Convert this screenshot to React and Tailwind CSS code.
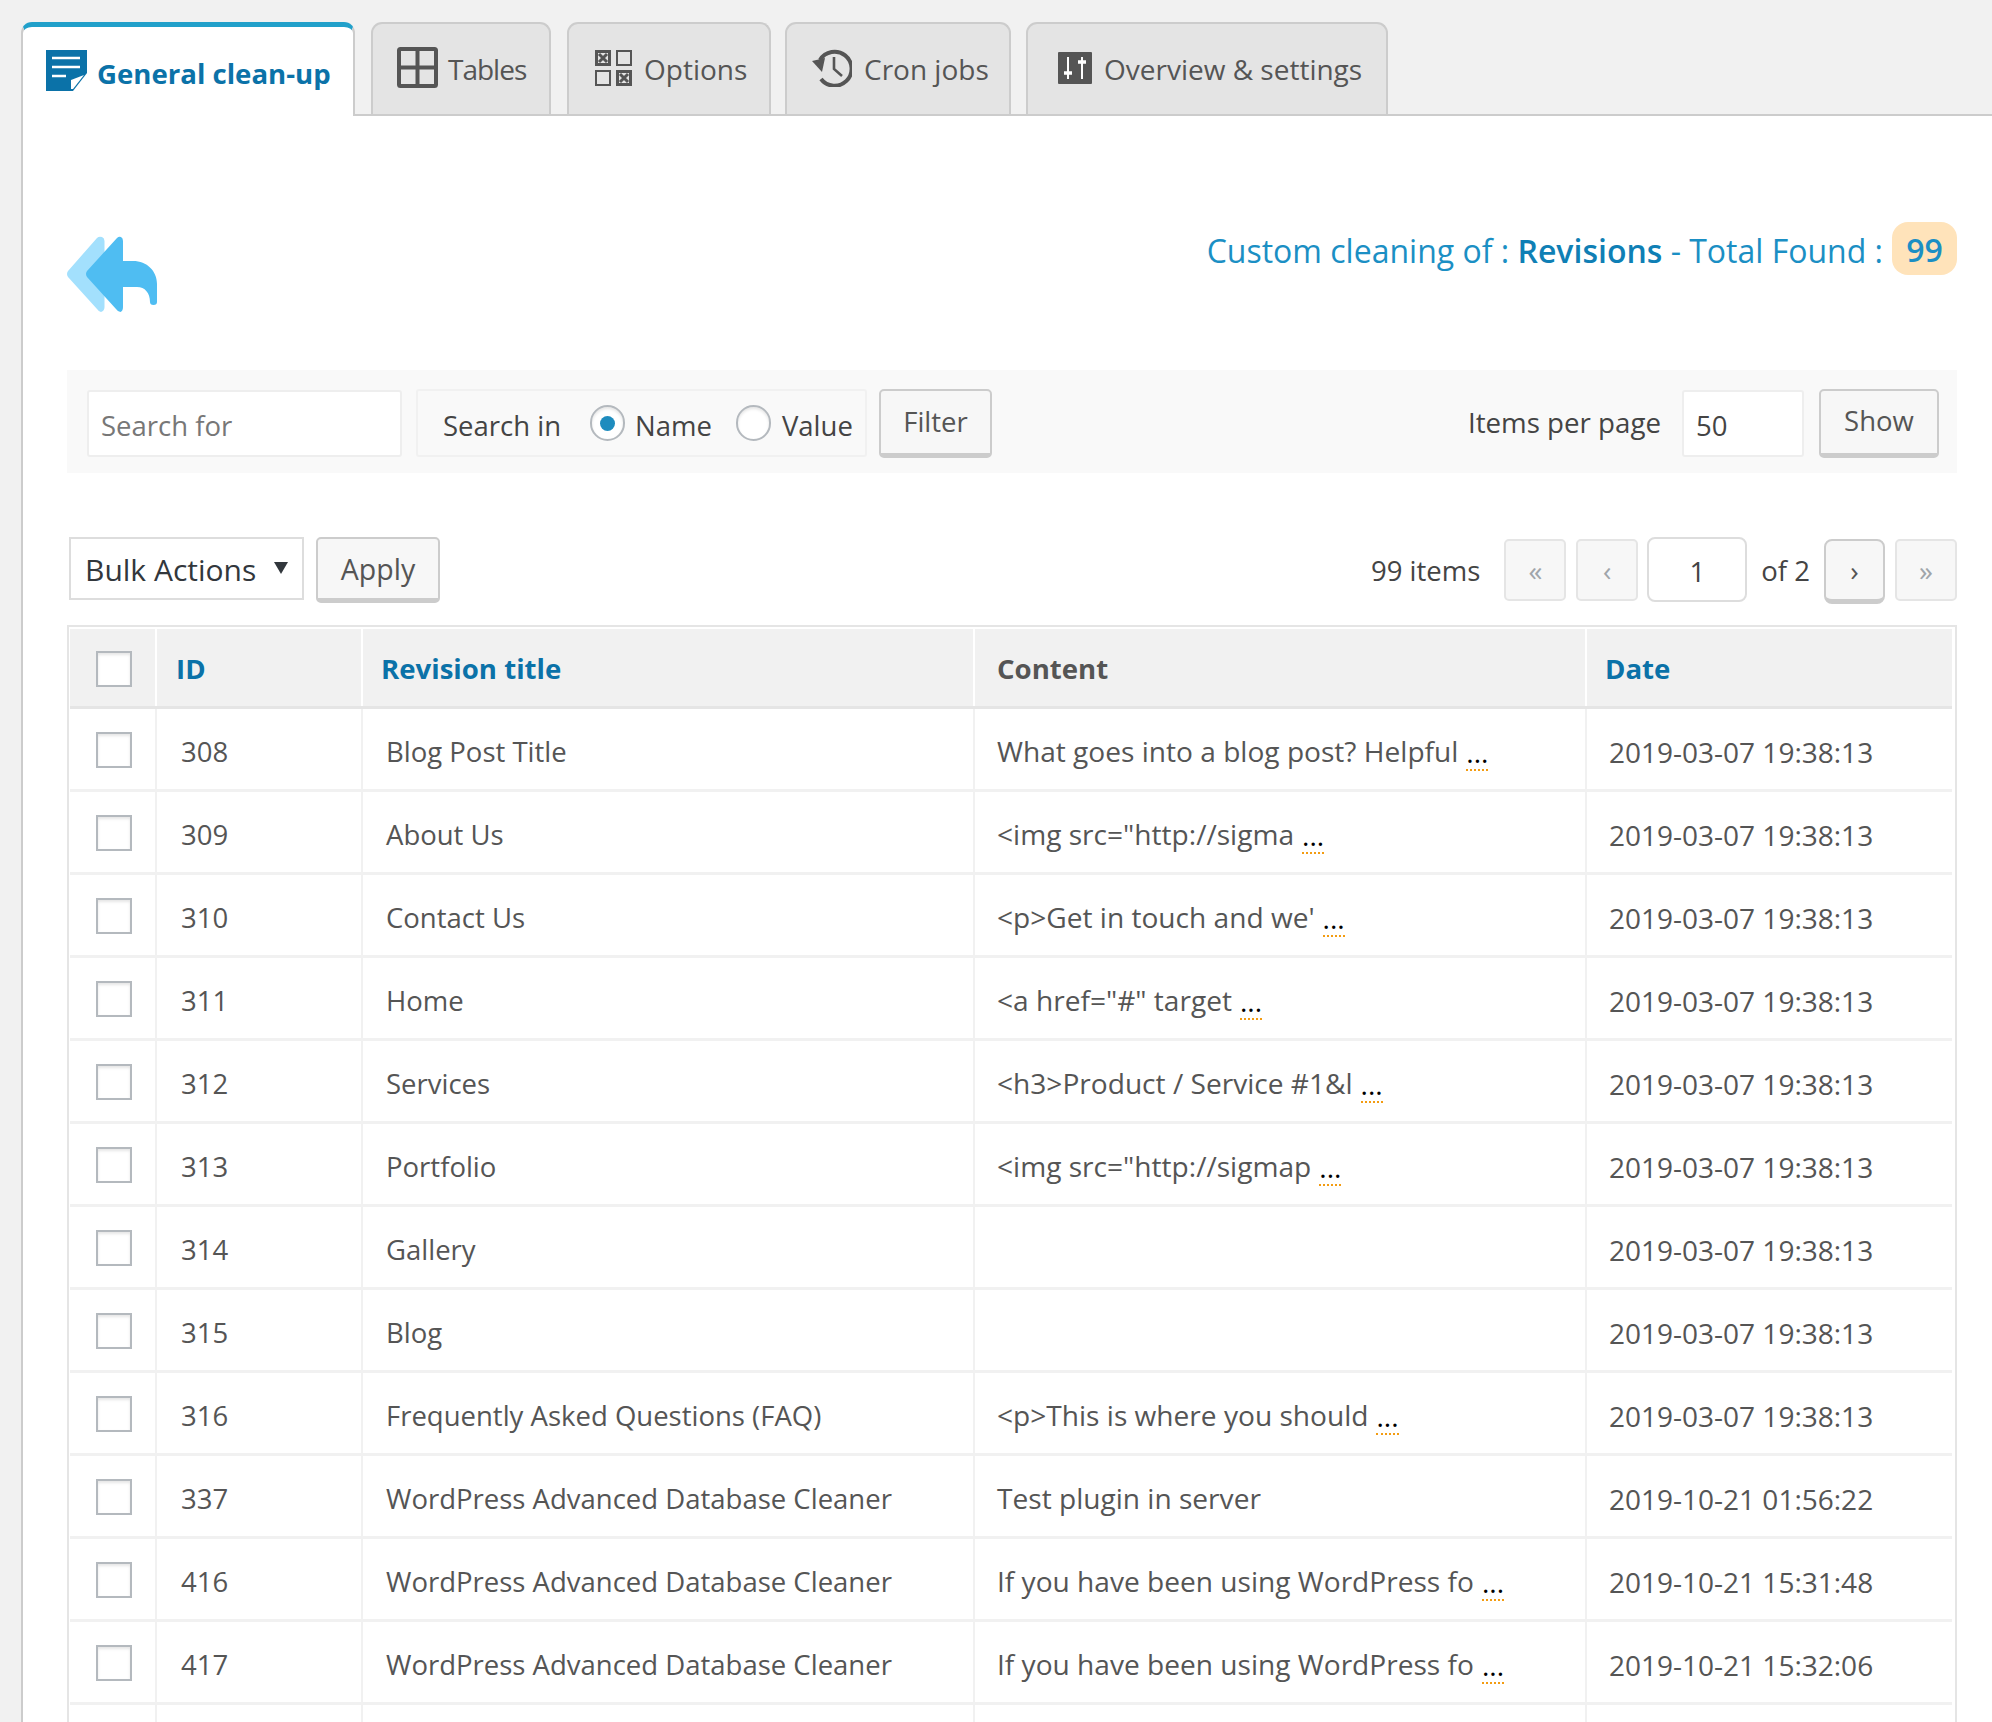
import React from "react";

const rows = [
  ["308", "Blog Post Title", "What goes into a blog post? Helpful", true, "2019-03-07 19:38:13"],
  ["309", "About Us", '<img src="http://sigma', true, "2019-03-07 19:38:13"],
  ["310", "Contact Us", "<p>Get in touch and we'", true, "2019-03-07 19:38:13"],
  ["311", "Home", '<a href="#" target', true, "2019-03-07 19:38:13"],
  ["312", "Services", "<h3>Product / Service #1&l", true, "2019-03-07 19:38:13"],
  ["313", "Portfolio", '<img src="http://sigmap', true, "2019-03-07 19:38:13"],
  ["314", "Gallery", "", false, "2019-03-07 19:38:13"],
  ["315", "Blog", "", false, "2019-03-07 19:38:13"],
  ["316", "Frequently Asked Questions (FAQ)", "<p>This is where you should", true, "2019-03-07 19:38:13"],
  ["337", "WordPress Advanced Database Cleaner", "Test plugin in server", false, "2019-10-21 01:56:22"],
  ["416", "WordPress Advanced Database Cleaner", "If you have been using WordPress fo", true, "2019-10-21 15:31:48"],
  ["417", "WordPress Advanced Database Cleaner", "If you have been using WordPress fo", true, "2019-10-21 15:32:06"],
];

const grid = "grid grid-cols-[87px_206px_612px_612px_1fr]";

function DocIcon() {
  return (
    <svg width="41" height="41" viewBox="0 0 41 41" className="shrink-0 mt-[23px]">
      <path d="M0 0H41V23L27 41H0Z" fill="#0b72a8" />
      <path d="M25 30L38 25L27 39H25Z" fill="#fff" />
      <path d="M6 8H34M6 17H34M6 26H20" stroke="#fff" strokeWidth="2.4" fill="none" />
    </svg>
  );
}
function TablesIcon() {
  return (
    <svg width="41" height="41" viewBox="0 0 41 41" className="shrink-0 mt-[23px]">
      <rect x="2" y="2" width="37" height="37" rx="1.5" fill="none" stroke="#555" strokeWidth="4" />
      <path d="M20.5 2V39M2 20.5H39" stroke="#555" strokeWidth="4" fill="none" />
    </svg>
  );
}
function OptionsIcon() {
  return (
    <svg width="37" height="36" viewBox="0 0 37 36" className="shrink-0 mt-[26px]">
      <rect x="1.500" y="1.500" width="13" height="13" fill="none" stroke="#555" strokeWidth="3" />
      <rect x="22" y="1" width="14" height="14" fill="none" stroke="#555" strokeWidth="2" />
      <rect x="1" y="21" width="14" height="14" fill="none" stroke="#555" strokeWidth="2" />
      <rect x="22.500" y="21.500" width="13" height="13" fill="none" stroke="#555" strokeWidth="3" />
      <path d="M4 4L12 12M12 4L4 12M25 24L33 32M33 24L25 32" stroke="#555" strokeWidth="3" fill="none" />
    </svg>
  );
}
function CronIcon() {
  return (
    <svg width="40" height="38" viewBox="0 0 40 38" className="shrink-0 mt-[25px]">
      <path d="M8 11A17 17 0 1 1 9 30" fill="none" stroke="#555" strokeWidth="4" />
      <path d="M0 12L13 9L10 23Z" fill="#555" />
      <path d="M22 8V20L30 27" fill="none" stroke="#555" strokeWidth="2.6" />
    </svg>
  );
}
function SettingsIcon() {
  return (
    <svg width="34" height="32" viewBox="0 0 34 32" className="shrink-0 mt-[28px]">
      <rect width="34" height="32" rx="1" fill="#555" />
      <path d="M10 5V27M24 5V27" stroke="#fff" strokeWidth="2" fill="none" />
      <path d="M6 21H14M20 10H28" stroke="#fff" strokeWidth="3.4" fill="none" />
    </svg>
  );
}
function BackIcon() {
  return (
    <svg width="90" height="76" viewBox="0 0 90 76" className="shrink-0">
      <path d="M1 35L30 2Q32 0 35 1Q37.5 2 37.5 5V71Q37.5 75 34 76Q32 76 30 73L1 41Q-1 38 1 35Z" fill="#a3e0fd" />
      <path d="M20 35L50 2Q52 0 54 1Q56 2 56 5V25H66C80 25 90 35 90 48V66Q90 69 86.500 69Q83 69 83 66C83 57 78 51 70 51H56V71Q56 75 53.500 76Q51 76 49 73L20 41Q18 38 20 35Z" fill="#4fbdf2" />
    </svg>
  );
}

function Tab({ className, icon, label, labelClass }) {
  return (
    <div className={`h-[92px] shrink-0 flex items-start bg-[#e4e4e4] border-2 border-b-0 border-[#cccccc] rounded-t-[11px] ${className}`}>
      {icon}
      <span className={`mt-[25px] text-[28px] text-[#555555] leading-[40px] whitespace-nowrap ${labelClass || ""}`}>{label}</span>
    </div>
  );
}

function Checkbox() {
  return <div className="w-[36px] h-[36px] border-2 border-[#b4b9be] bg-white shadow-[inset_0_2px_3px_rgba(0,0,0,0.1)]" />;
}

function Btn({ className, children }) {
  return (
    <div className={`flex items-center justify-center bg-[#f7f7f7] border-2 border-b-[5px] border-[#cccccc] rounded-[5px] text-[#555555] ${className}`}>
      {children}
    </div>
  );
}

function PageBtn({ children }) {
  return (
    <div className="w-[62px] h-[62px] flex items-center justify-center bg-[#f7f7f7] border-2 border-[#e5e5e5] rounded-[5px] text-[#a0a5aa] text-[28px]">
      {children}
    </div>
  );
}

function Radio({ on }) {
  return (
    <div className="w-[35px] h-[36px] rounded-full border-2 border-[#b4b9be] bg-white shadow-[inset_0_2px_3px_rgba(0,0,0,0.1)] flex items-center justify-center">
      {on && <div className="w-[15px] h-[15px] rounded-full bg-[#1e8cbe]" />}
    </div>
  );
}

function Row({ r }) {
  return (
    <div className={`${grid} h-[83px] border-b-[3px] border-[#f1f1f1] text-[#555555]`}>
      <div className="border-r-2 border-[#f1f1f1] pl-[26px] pt-[2px] flex items-center">
        <Checkbox />
      </div>
      <div className="border-r-2 border-[#f1f1f1] pl-[24px] pt-[5px] flex items-center text-[27.500px]">{r[0]}</div>
      <div className="border-r-2 border-[#f1f1f1] pl-[23px] pt-[5px] flex items-center whitespace-nowrap text-[27.500px]">{r[1]}</div>
      <div className="border-r-2 border-[#f1f1f1] pl-[22px] pt-[5px] flex items-center whitespace-nowrap text-[28.100px]">
        {r[2]}
        {r[3] && (
          <span className="ml-[8px] text-black border-b-2 border-dotted border-[#f39c12] leading-[34px] h-[36px] mt-[3px]">...</span>
        )}
      </div>
      <div className="pl-[22px] pt-[5px] flex items-center whitespace-nowrap text-[28px]">{r[4]}</div>
    </div>
  );
}

export default function App() {
  return (
    <div className="w-full h-[1722px] overflow-hidden bg-[#f1f1f1] pt-[22px] pl-[21px] font-['Open_Sans',sans-serif]">
      <div className="flex items-end h-[94px] border-b-2 border-[#cccccc]">
        <div className="w-[334px] h-[94px] -mb-[2px] relative shrink-0 flex items-start pl-[23px] gap-[10px] bg-white border-x-2 border-[#cccccc] border-t-[5px] border-t-[#21a0ca] rounded-t-[11px]">
          <DocIcon />
          <span className="mt-[26px] text-[27.600px] font-bold text-[#0b72a8] leading-[40px] whitespace-nowrap">General clean-up</span>
        </div>
        <div className="flex">
          <Tab className="ml-[16px] w-[180px] pl-[24px] gap-[10px]" labelClass="tracking-[-1px]" icon={<TablesIcon />} label="Tables" />
          <Tab className="ml-[16px] w-[204px] pl-[26px] gap-[12px]" icon={<OptionsIcon />} label="Options" />
          <Tab className="ml-[14px] w-[226px] pl-[25px] gap-[12px]" icon={<CronIcon />} label="Cron jobs" />
          <Tab className="ml-[15px] w-[362px] pl-[30px] gap-[12px]" icon={<SettingsIcon />} label="Overview & settings" />
        </div>
      </div>

      <div className="bg-white border-l-2 border-[#cccccc] pl-[44px] pr-[35px] h-[1700px]">
        <div className="h-[254px] pt-[106px] flex justify-between items-start">
          <div className="mt-[14px]">
            <BackIcon />
          </div>
          <div className="flex items-center text-[#1b8fc4] text-[32px]">
            <div className="flex pt-[5px]">
              <span>Custom cleaning of :&nbsp;</span>
              <span className="font-semibold text-[#0f7fb5]">Revisions</span>
              <span>&nbsp;- Total Found :</span>
            </div>
            <span className="ml-[9px] w-[65px] h-[53px] pt-[2px] flex items-center justify-center rounded-[16px] bg-[#ffe3ba] font-semibold">99</span>
          </div>
        </div>

        <div className="h-[103px] bg-[#f9f9f9] pl-[20px] pr-[18px] pt-[3px] flex items-center justify-between text-[27.500px] text-[#444444]">
          <div className="flex items-center">
            <div className="w-[315px] h-[67px] bg-white border-2 border-[#eeeeee] rounded-[3px] flex items-center pl-[12px] pt-[6px] text-[#777777]">Search for</div>
            <div className="ml-[14px] w-[451px] h-[68px] border-2 border-[#f1f1f1] rounded-[3px] flex items-center pl-[25px]">
              <span className="pt-[6px]">Search in</span>
              <div className="ml-[29px]"><Radio on /></div>
              <span className="ml-[10px] pt-[6px]">Name</span>
              <div className="ml-[24px]"><Radio /></div>
              <span className="ml-[11px] pt-[6px]">Value</span>
            </div>
            <Btn className="ml-[12px] w-[113px] h-[69px]">Filter</Btn>
          </div>
          <div className="flex items-center">
            <span className="text-[27.700px]">Items per page</span>
            <div className="ml-[21px] w-[122px] h-[67px] bg-white border-2 border-[#eeeeee] rounded-[3px] flex items-center pl-[12px] pt-[6px]">50</div>
            <Btn className="ml-[15px] w-[120px] h-[69px] pb-[2px]">Show</Btn>
          </div>
        </div>

        <div className="mt-[64px] h-[67px] flex justify-between text-[27.500px] text-[#444444]">
          <div className="flex items-start ml-[2px]">
            <div className="relative w-[235px] h-[63px] bg-white border-2 border-[#dddddd] flex items-center pl-[14px] pt-[2px] text-[30px] text-[#32373c]">
              Bulk Actions
              <svg width="14" height="12" viewBox="0 0 14 12" className="absolute right-[14px] top-[23px]">
                <path d="M0 0H14L7 12Z" fill="#32373c" />
              </svg>
            </div>
            <Btn className="ml-[12px] w-[124px] h-[66px] pt-[2px] text-[28.500px]">Apply</Btn>
          </div>
          <div className="flex items-start">
            <span className="mt-[13px] mr-[24px]">99 items</span>
            <div className="mt-[2px]"><PageBtn>«</PageBtn></div>
            <div className="mt-[2px] ml-[10px]"><PageBtn>‹</PageBtn></div>
            <div className="ml-[9px] w-[100px] h-[65px] pt-[4px] bg-white border-2 border-[#dddddd] rounded-[8px] flex items-center justify-center">1</div>
            <span className="ml-[14px] mt-[13px]">of 2</span>
            <Btn className="ml-[14px] mt-[2px] w-[61px] h-[65px] text-[28px] rounded-[8px]">›</Btn>
            <div className="mt-[2px] ml-[10px]"><PageBtn>»</PageBtn></div>
          </div>
        </div>

        <div className="mt-[21px] border-2 border-b-0 border-[#e5e5e5] pt-[2px] pl-[1px] pr-[3px]">
          <div className={`${grid} h-[80px] bg-[#f1f1f1] border-b-[3px] border-[#e5e5e5] text-[27.600px] font-bold`}>
            <div className="border-r-2 border-white pl-[26px] pt-[2px] flex items-center"><Checkbox /></div>
            <div className="border-r-2 border-white pl-[19px] pt-[2px] flex items-center text-[#0b72a8]">ID</div>
            <div className="border-r-2 border-white pl-[18px] pt-[2px] flex items-center text-[#0b72a8]">Revision title</div>
            <div className="border-r-2 border-white pl-[22px] pt-[2px] flex items-center text-[#555555]">Content</div>
            <div className="pl-[18px] pt-[2px] flex items-center text-[#0b72a8]">Date</div>
          </div>
          {rows.map((r) => (
            <Row key={r[0]} r={r} />
          ))}
          <div className={`${grid} h-[83px]`}>
            <div className="border-r-2 border-[#f1f1f1]" />
            <div className="border-r-2 border-[#f1f1f1]" />
            <div className="border-r-2 border-[#f1f1f1]" />
            <div className="border-r-2 border-[#f1f1f1]" />
            <div />
          </div>
        </div>
      </div>
    </div>
  );
}
